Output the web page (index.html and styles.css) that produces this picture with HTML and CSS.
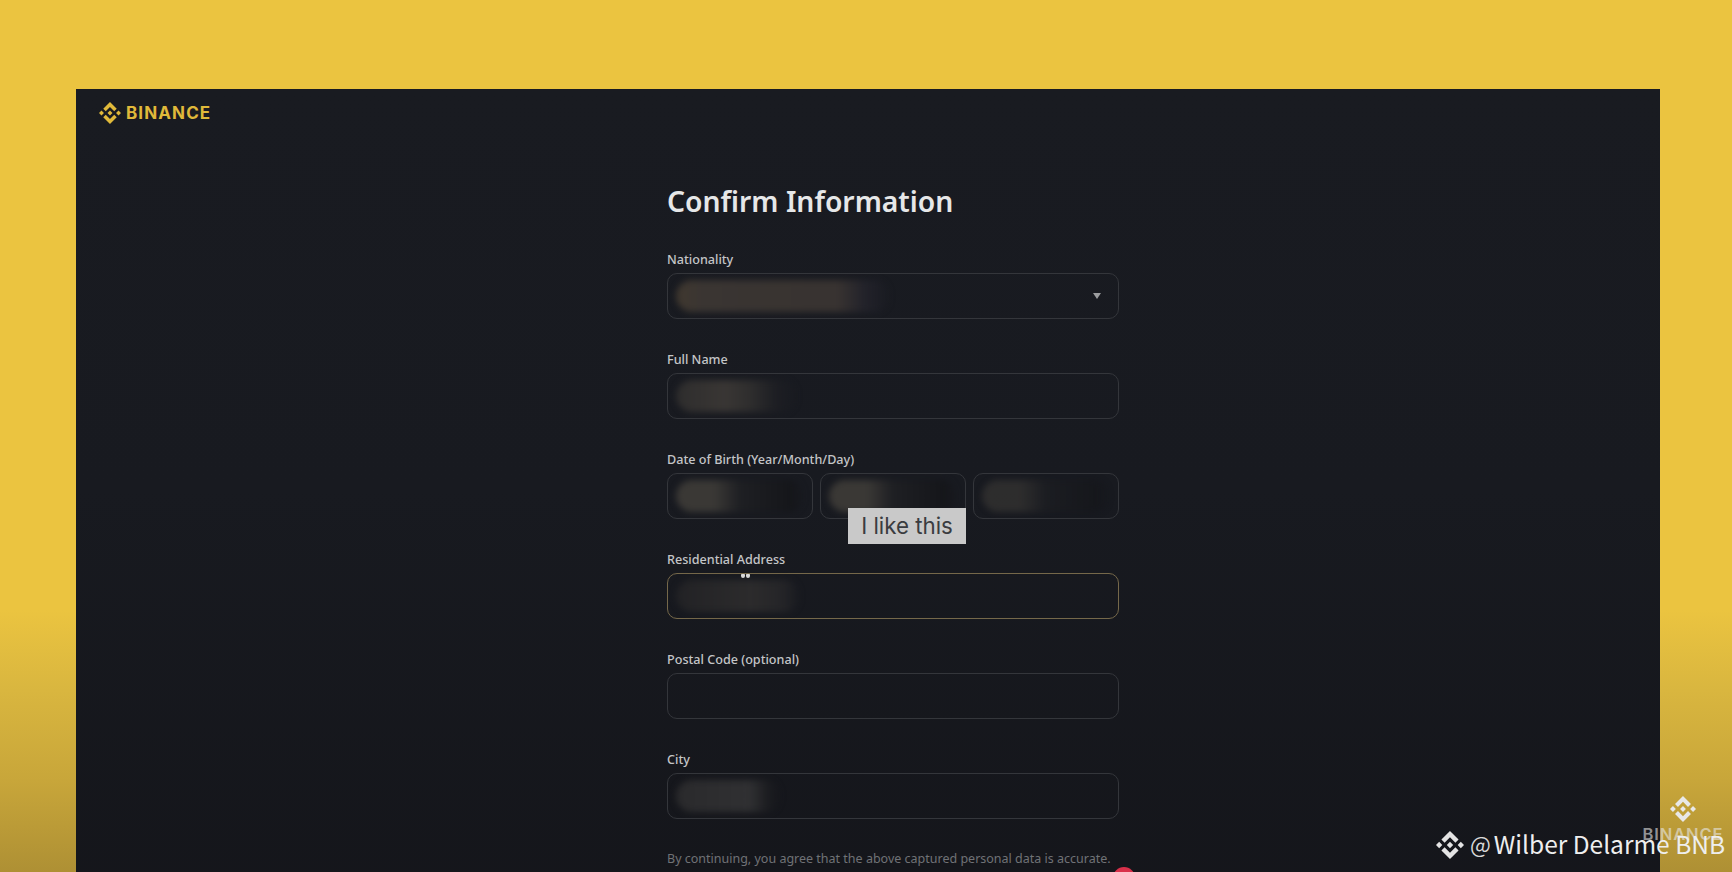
FILE: index.html
```html
<!DOCTYPE html>
<html lang="en">
<head>
<meta charset="utf-8">
<title>Confirm Information</title>
<link rel="stylesheet" href="styles.css">
</head>
<body>
<svg class="defs" width="0" height="0" aria-hidden="true"><defs><symbol id="bn" viewBox="0 0 24 24"><path d="M16.624 13.9202l2.7175 2.7154-7.353 7.353-7.353-7.352 2.7175-2.7164 4.6355 4.6595 4.6356-4.6595zm4.6366-4.6366L24 12l-2.7154 2.7164L18.5682 12l2.6924-2.7164zm-9.272.001l2.7163 2.6914-2.7164 2.7174v-.001L9.2721 12l2.7164-2.7154zm-9.2722-.001L5.4088 12l-2.6914 2.6924L0 12l2.7164-2.7164zM11.9885.0115l7.353 7.329-2.7174 2.7154-4.6356-4.6356-4.6355 4.6595-2.7174-2.7154 7.353-7.353z"/></symbol></defs></svg>
<main class="panel">
  <header class="brand">
    <svg class="brand-icon"><use href="#bn"/></svg>
    <span class="brand-name">BINANCE</span>
  </header>
  <section class="form">
    <h1 class="title">Confirm Information</h1>
    <div class="fields">
      <div class="field">
        <div class="label">Nationality</div>
        <div class="box box-select">
          <span class="smear smear-long"></span>
          <span class="caret"></span>
        </div>
      </div>
      <div class="field">
        <div class="label">Full Name</div>
        <div class="box"><span class="smear smear-name"></span></div>
      </div>
      <div class="field">
        <div class="label">Date of Birth (Year/Month/Day)</div>
        <div class="dob">
          <div class="box"><span class="smear smear-date"></span></div>
          <div class="box"><span class="smear smear-date"></span></div>
          <div class="box"><span class="smear smear-date smear-dim"></span></div>
        </div>
      </div>
      <div class="field">
        <div class="label">Residential Address</div>
        <div class="box box-focus">
          <span class="smear smear-addr"></span>
          <span class="cursor"></span>
        </div>
      </div>
      <div class="field">
        <div class="label">Postal Code (optional)</div>
        <div class="box"></div>
      </div>
      <div class="field">
        <div class="label">City</div>
        <div class="box"><span class="smear smear-city"></span></div>
      </div>
    </div>
    <p class="note">By continuing, you agree that the above captured personal data is accurate.</p>
  </section>
  <div class="caption">I like this</div>
  <span class="red-dot"></span>
</main>
<div class="mark-corner">
  <svg class="mark-corner-icon"><use href="#bn"/></svg>
  <span class="mark-corner-name">BINANCE</span>
</div>
<div class="mark-user">
  <svg class="mark-user-icon"><use href="#bn"/></svg>
  <span class="mark-user-at">@</span>
  <span>Wilber Delarme BNB</span>
</div>
</body>
</html>
```
FILE: styles.css
```css
* { box-sizing: border-box; }
html, body { height: 100%; }
body {
  margin: 0;
  height: 872px;
  overflow: hidden;
  position: relative;
  display: flex;
  flex-direction: column;
  padding: 89px 72px 0 76px;
  background: linear-gradient(180deg, #ebc440 0, #ebc440 610px, #d9b63f 690px, #c8a63a 780px, #ae9034 872px);
  font-family: "Noto Sans", "Liberation Sans", sans-serif;
}
.defs { position: absolute; }
.panel {
  flex: 1;
  position: relative;
  overflow: hidden;
  background: linear-gradient(180deg, #191b21 0, #181a20 400px, #14151a 872px);
}
.brand {
  display: flex;
  align-items: center;
  gap: 5px;
  padding: 13px 0 0 23px;
  height: 35px;
}
.brand-icon { width: 22px; height: 22px; fill: #e0b93a; }
.brand-name {
  font-family: "Inter", sans-serif;
  font-weight: 700;
  font-size: 17px;
  letter-spacing: 1.1px;
  color: #e0b93a;
}
.form {
  width: 452px;
  margin-left: 591px;
  padding-top: 59px;
}
.title {
  margin: 0;
  height: 36px;
  line-height: 36px;
  font-size: 28.3px;
  font-weight: 600;
  color: #e6e7e8;
}
.fields {
  display: flex;
  flex-direction: column;
  gap: 32px;
  margin-top: 32px;
}
.label {
  height: 18px;
  line-height: 18px;
  margin-bottom: 4px;
  font-size: 12.6px;
  font-weight: 500;
  color: #c4c5c7;
}
.box {
  position: relative;
  display: flex;
  align-items: center;
  height: 46px;
  padding-left: 8px;
  border: 1.5px solid #34363b;
  border-radius: 10px;
  overflow: hidden;
  flex: 1;
}
.box-select { justify-content: space-between; padding-right: 17px; }
.box-focus { border-color: #75684a; overflow: visible; }
.dob { display: flex; gap: 7px; }
.smear {
  display: block;
  height: 32px;
  border-radius: 16px;
  filter: blur(3px);
}
.smear-long { width: 215px; background: linear-gradient(90deg, #40382f 0, #3a3532 12%, #383331 75%, #22222a 88%, rgba(24,26,32,0) 100%); }
.smear-name { width: 122px; background: linear-gradient(90deg, #2e2d2d 0, #393634 40%, #2f2e2e 60%, #1d1e23 82%, rgba(24,26,32,0) 100%); }
.smear-date { width: 128px; background: linear-gradient(90deg, #3a3835 0, #3a3835 30%, #1e1f23 50%, #15161a 90%, rgba(24,26,32,0) 100%); }
.smear-dim { opacity: 0.65; }
.smear-addr { width: 125px; background: linear-gradient(90deg, #222225 0, #2c2b2c 60%, #252528 85%, rgba(24,26,32,0) 100%); }
.smear-city { width: 105px; background: linear-gradient(90deg, #2a2a2c 0, #303032 70%, #1b1c20 88%, rgba(24,26,32,0) 100%); }
.caret {
  width: 0;
  height: 0;
  border-left: 4px solid transparent;
  border-right: 4px solid transparent;
  border-top: 6px solid #9c9d9f;
}
.cursor {
  position: absolute;
  left: 73px;
  top: 0;
  width: 4px;
  height: 4px;
  border-radius: 1px 1px 3px 3px;
  background: #d8d8d8;
  box-shadow: 5px 0 0 #d8d8d8;
}
.note {
  margin: 31px 0 0;
  font-size: 12.5px;
  line-height: 18px;
  color: #707276;
  white-space: nowrap;
}
.caption {
  position: absolute;
  left: 772px;
  top: 419px;
  width: 118px;
  height: 36px;
  line-height: 36px;
  text-align: center;
  background: #c9c9c9;
  color: #3a3c40;
  font-family: "Inter", sans-serif;
  font-size: 22.3px;
}
.red-dot {
  position: absolute;
  left: 1037px;
  top: 778px;
  width: 22px;
  height: 22px;
  border-radius: 50%;
  background: #d9304a;
}
.mark-corner {
  position: absolute;
  right: 7px;
  top: 796px;
  width: 84px;
  display: flex;
  flex-direction: column;
  align-items: center;
  gap: 5px;
  color: rgba(232, 232, 232, 0.6);
}
.mark-corner-icon { width: 26px; height: 26px; fill: #e8e8e8; }
.mark-corner-name {
  font-family: "Inter", sans-serif;
  font-weight: 600;
  font-size: 16.5px;
  line-height: 15px;
  letter-spacing: 0.9px;
}
.mark-user {
  position: absolute;
  left: 1436px;
  top: 828px;
  display: flex;
  align-items: center;
  height: 30px;
  font-family: "Noto Sans CJK SC", "Noto Sans", sans-serif;
  font-size: 24.5px;
  color: #eeeeee;
  white-space: nowrap;
}
.mark-user-icon { width: 28px; height: 28px; fill: #e4e4e4; flex: none; margin: 4px 6px 0 0; }
.mark-user-at { margin-right: 3px; color: #d8d8d8; font-size: 22px; }
```
